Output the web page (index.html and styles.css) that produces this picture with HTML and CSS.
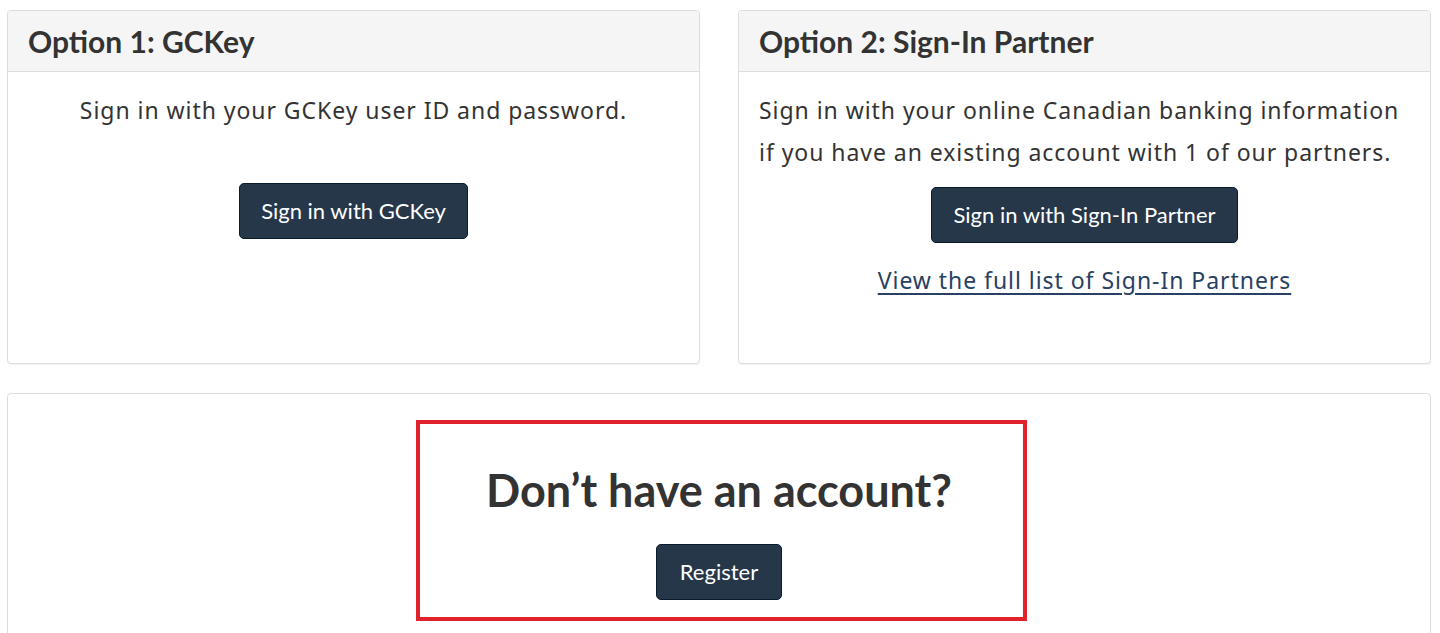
FILE: index.html
```html
<!DOCTYPE html>
<html lang="en">
<head>
<meta charset="utf-8">
<title>Sign in</title>
<link rel="stylesheet" href="styles.css">
</head>
<body>
<main class="page">
  <div class="options">
    <section class="panel">
      <header class="panel-heading"><h2 class="panel-title">Option 1: GCKey</h2></header>
      <div class="panel-body centered">
        <p class="lead-text">Sign in with your GCKey user ID and password.</p>
        <a class="btn btn-gckey" href="#">Sign in with GCKey</a>
      </div>
    </section>
    <section class="panel">
      <header class="panel-heading"><h2 class="panel-title">Option 2: Sign-In Partner</h2></header>
      <div class="panel-body">
        <p class="lead-text">Sign in with your online Canadian banking information if you have an existing account with 1 of our partners.</p>
        <div class="centered">
          <a class="btn btn-partner" href="#">Sign in with Sign-In Partner</a>
          <p class="partner-link"><a href="#">View the full list of Sign-In Partners</a></p>
        </div>
      </div>
    </section>
  </div>
  <section class="panel register-panel">
    <div class="highlight">
      <h2 class="register-title">Don’t have an account?</h2>
      <a class="btn btn-register" href="#">Register</a>
    </div>
  </section>
</main>
</body>
</html>
```
FILE: styles.css
```css
html, body {
  margin: 0;
  padding: 0;
  background: #fff;
}
body {
  font-family: "Noto Sans", "DejaVu Sans", sans-serif;
  font-size: 23px;
  letter-spacing: 0.95px;
  line-height: 42px;
  color: #333;
  overflow: hidden;
}
.page {
  padding: 10px 9px 0 7px;
}
.options {
  display: grid;
  grid-template-columns: 1fr 1fr;
  column-gap: 38px;
}
.panel {
  border: 1px solid #ddd;
  border-radius: 4px;
  background: #fff;
  box-shadow: 0 1px 1px rgba(0,0,0,0.05);
  box-sizing: border-box;
}
.options .panel {
  height: 354px;
}
.panel-heading {
  background: #f5f5f5;
  border-bottom: 1px solid #ddd;
  border-radius: 3px 3px 0 0;
  padding: 13px 20px 13px;
}
.panel-title {
  margin: 0;
  font-family: Lato, "Liberation Sans", sans-serif;
  font-weight: 700;
  font-size: 30px;
  letter-spacing: 0;
  line-height: 34px;
  color: #333;
}
.panel-body {
  padding: 17px 20px 0;
}
.centered {
  text-align: center;
}
.lead-text {
  margin: 0;
}
.btn {
  display: inline-block;
  font-family: Lato, "Liberation Sans", sans-serif;
  font-size: 22px;
  letter-spacing: 0;
  line-height: 32px;
  color: #fff;
  background: #26374a;
  border: 1px solid #091c2d;
  border-radius: 5px;
  padding: 11px 21px;
  text-decoration: none;
}
.btn-gckey {
  margin-top: 52px;
}
.btn-partner {
  margin-top: 14px;
}
.btn-register {
  padding: 11px 23px;
}
.partner-link {
  margin: 16px 0 0;
}
.partner-link a {
  color: #284162;
  text-decoration: underline;
  text-underline-offset: 4px;
}
.register-panel {
  margin-top: 29px;
  height: 260px;
  padding-top: 26px;
}
.highlight {
  width: 611px;
  box-sizing: border-box;
  margin-left: 408px;
  border: 4px solid #e0222b;
  padding: 39px 5px 17px 0;
  text-align: center;
}
.register-title {
  margin: 0 0 27px;
  font-family: Lato, "Liberation Sans", sans-serif;
  font-weight: 700;
  font-size: 45px;
  letter-spacing: 0;
  line-height: 54px;
  color: #333;
}
```
